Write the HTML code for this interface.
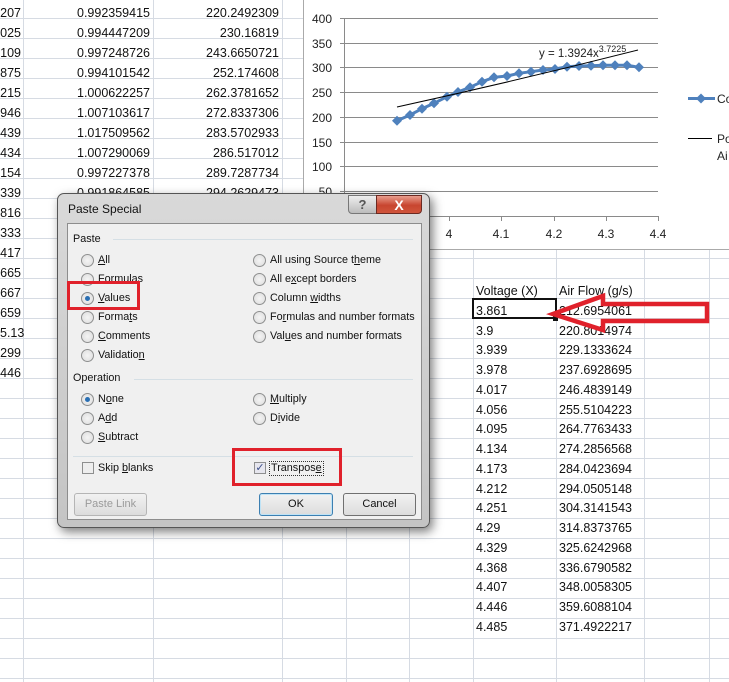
<!DOCTYPE html>
<html><head><meta charset="utf-8"><style>
*{margin:0;padding:0;box-sizing:border-box}
body{width:729px;height:682px;overflow:hidden;position:relative;background:#fff;font-family:"Liberation Sans",sans-serif;font-size:12.5px;color:#111}
.grid{position:absolute;left:0;top:0;width:729px;height:682px;
background-image:repeating-linear-gradient(to bottom,transparent 0,transparent 18px,#d6dbe3 18px,#d6dbe3 19px,transparent 19px,transparent 20px);}
.v{position:absolute;top:0;width:1px;height:682px;background:#d6dbe3}
.t{position:absolute;white-space:nowrap;line-height:14px}
.r{text-align:right}
.chart{position:absolute;left:303px;top:0;width:426px;height:250px;background:#fff;border-left:1px solid #aaa;border-bottom:1px solid #aaa}
.dlg{position:absolute;left:57px;top:193px;width:373px;height:335px;border-radius:7px;border:1px solid #555;background:linear-gradient(#d9d9d9,#c4c4c4);box-shadow:3px 4px 10px rgba(0,0,0,.5)}
.inner{position:absolute;left:9px;top:29px;width:355px;height:297px;background:#f0f0f0;border:1px solid #8d8d8d}
.lb{position:absolute;font-size:10.8px;white-space:nowrap;line-height:13px}
.rad{position:absolute;width:13px;height:13px;border-radius:50%;border:1px solid #8e8f8f;background:radial-gradient(circle,#f4f4f4,#dcdcdc)}
.rad.on::after{content:"";position:absolute;left:3px;top:3px;width:5px;height:5px;border-radius:50%;background:#2a6fb3}
.sep{position:absolute;height:1px;background:#d5dfe5}
.btn{position:absolute;height:23px;border:1px solid #707070;border-radius:3px;background:linear-gradient(#f2f2f2,#dcdcdc);font-size:11px;text-align:center;line-height:21px}
.redbox{position:absolute;border:3px solid #e0212b}
</style></head><body>
<div class="grid"></div>
<div class="v" style="left:23px"></div><div class="v" style="left:153px"></div><div class="v" style="left:282px"></div><div class="v" style="left:346px"></div><div class="v" style="left:409px"></div><div class="v" style="left:473px"></div><div class="v" style="left:556px"></div><div class="v" style="left:644px"></div><div class="v" style="left:709px"></div>

<div class="t r" style="left:0;width:21px;top:3px;line-height:20px">207<br>025<br>109<br>875<br>215<br>946<br>439<br>434<br>154<br>339<br>816<br>333<br>417<br>665<br>667<br>659<br>5.13<br>299<br>446</div>
<div class="t r" style="left:30px;width:120px;top:3px;line-height:20px">0.992359415<br>0.994447209<br>0.997248726<br>0.994101542<br>1.000622257<br>1.007103617<br>1.017509562<br>1.007290069<br>0.997227378<br>0.991864585</div>
<div class="t r" style="left:160px;width:119px;top:3px;line-height:20px">220.2492309<br>230.16819<br>243.6650721<br>252.174608<br>262.3781652<br>272.8337306<br>283.5702933<br>286.517012<br>289.7287734<br>294.2629473</div>

<div class="t" style="left:476px;top:282px;line-height:19.75px">Voltage (X)<br>3.861<br>3.9<br>3.939<br>3.978<br>4.017<br>4.056<br>4.095<br>4.134<br>4.173<br>4.212<br>4.251<br>4.29<br>4.329<br>4.368<br>4.407<br>4.446<br>4.485</div>
<div class="t" style="left:559px;top:282px;line-height:19.75px">Air Flow (g/s)<br>212.6954061<br>220.8014974<br>229.1333624<br>237.6928695<br>246.4839149<br>255.5104223<br>264.7763433<br>274.2856568<br>284.0423694<br>294.0505148<br>304.3141543<br>314.8373765<br>325.6242968<br>336.6790582<br>348.0058305<br>359.6088104<br>371.4922217</div>
<div style="position:absolute;left:472px;top:298px;width:85px;height:21px;border:2px solid #111"></div>
<div style="position:absolute;left:553px;top:316px;width:5px;height:5px;background:#111"></div>

<div class="chart"></div>
<svg style="position:absolute;left:0;top:0" width="729" height="682">
<g stroke="#8a8a8a" stroke-width="1">
<line x1="344" y1="18.5" x2="658" y2="18.5"/><line x1="344" y1="43.5" x2="658" y2="43.5"/><line x1="344" y1="67.5" x2="658" y2="67.5"/><line x1="344" y1="92.5" x2="658" y2="92.5"/><line x1="344" y1="117.5" x2="658" y2="117.5"/><line x1="344" y1="142.5" x2="658" y2="142.5"/><line x1="344" y1="166.5" x2="658" y2="166.5"/><line x1="344" y1="191.5" x2="658" y2="191.5"/>
<line x1="344.5" y1="18" x2="344.5" y2="217"/><line x1="340" y1="18.5" x2="344" y2="18.5"/><line x1="340" y1="43.5" x2="344" y2="43.5"/><line x1="340" y1="67.5" x2="344" y2="67.5"/><line x1="340" y1="92.5" x2="344" y2="92.5"/><line x1="340" y1="117.5" x2="344" y2="117.5"/><line x1="340" y1="142.5" x2="344" y2="142.5"/><line x1="340" y1="166.5" x2="344" y2="166.5"/><line x1="340" y1="191.5" x2="344" y2="191.5"/>
<line x1="344" y1="216.5" x2="658" y2="216.5"/>
<line x1="449.5" y1="216" x2="449.5" y2="221"/><line x1="501.5" y1="216" x2="501.5" y2="221"/><line x1="554.5" y1="216" x2="554.5" y2="221"/><line x1="606.5" y1="216" x2="606.5" y2="221"/><line x1="658.5" y1="216" x2="658.5" y2="221"/>
</g>
<g font-family="Liberation Sans,sans-serif" font-size="12" fill="#222" text-anchor="end">
<text x="332" y="23">400</text><text x="332" y="48">350</text><text x="332" y="72">300</text><text x="332" y="97">250</text><text x="332" y="122">200</text><text x="332" y="147">150</text><text x="332" y="171">100</text><text x="332" y="196">50</text>
</g>
<g font-family="Liberation Sans,sans-serif" font-size="12" fill="#222" text-anchor="middle">
<text x="449" y="238">4</text><text x="501" y="238">4.1</text><text x="554" y="238">4.2</text><text x="606" y="238">4.3</text><text x="658" y="238">4.4</text>
</g>
<polyline fill="none" stroke="#4f81bd" stroke-width="3" points="397,120.7 410,115 422,108.7 434,103.3 447,96.7 458,92 470,87.3 482,81.7 494,77.3 507,76 519,73.3 531,71.7 543,70 555,69 567,66.7 579,66 591,65.7 603,65.3 615,65.3 627,65.3 639,67.3"/>
<g fill="#4f81bd">
<path d="M397 115.7l5 5-5 5-5-5z"/><path d="M410 110l5 5-5 5-5-5z"/><path d="M422 103.7l5 5-5 5-5-5z"/><path d="M434 98.3l5 5-5 5-5-5z"/><path d="M447 91.7l5 5-5 5-5-5z"/><path d="M458 87l5 5-5 5-5-5z"/><path d="M470 82.3l5 5-5 5-5-5z"/><path d="M482 76.7l5 5-5 5-5-5z"/><path d="M494 72.3l5 5-5 5-5-5z"/><path d="M507 71l5 5-5 5-5-5z"/><path d="M519 68.3l5 5-5 5-5-5z"/><path d="M531 66.7l5 5-5 5-5-5z"/><path d="M543 65l5 5-5 5-5-5z"/><path d="M555 64l5 5-5 5-5-5z"/><path d="M567 61.7l5 5-5 5-5-5z"/><path d="M579 61l5 5-5 5-5-5z"/><path d="M591 60.7l5 5-5 5-5-5z"/><path d="M603 60.3l5 5-5 5-5-5z"/><path d="M615 60.3l5 5-5 5-5-5z"/><path d="M627 60.3l5 5-5 5-5-5z"/><path d="M639 62.3l5 5-5 5-5-5z"/>
</g>
<path d="M397 107 Q520 80 638 50" fill="none" stroke="#000" stroke-width="1"/>
<text x="539" y="57" font-family="Liberation Sans,sans-serif" font-size="11.5" fill="#222">y = 1.3924x<tspan dy="-5" font-size="9">3.7225</tspan></text>
<line x1="688" y1="98.5" x2="715" y2="98.5" stroke="#4f81bd" stroke-width="3"/><path d="M701 93.5l5 5-5 5-5-5z" fill="#4f81bd"/>
<text x="717" y="103" font-family="Liberation Sans,sans-serif" font-size="12" fill="#222">Co</text>
<line x1="688" y1="138.5" x2="712" y2="138.5" stroke="#000"/>
<text x="717" y="143" font-family="Liberation Sans,sans-serif" font-size="12" fill="#222">Po</text>
<text x="717" y="160" font-family="Liberation Sans,sans-serif" font-size="12" fill="#222">Ai</text>
<path d="M553 314 L603 296 L603 304 L707 304 L707 321 L603 321 L603 330 Z" fill="none" stroke="#e0212b" stroke-width="4.5" stroke-linejoin="miter"/>
</svg>

<div class="dlg">
 <div class="lb" style="left:10px;top:9px;font-size:12px">Paste Special</div>
 <div style="position:absolute;left:290px;top:1px;width:29px;height:19px;border:1px solid #777;border-radius:0 0 0 4px;background:linear-gradient(#eee,#bbb);text-align:center;font-size:13px;font-weight:bold;color:#555;line-height:18px">?</div>
 <div style="position:absolute;left:318px;top:1px;width:46px;height:19px;border:1px solid #6b2a22;border-radius:0 0 4px 0;background:linear-gradient(#e99e8e,#c8452f 55%,#d0553c);text-align:center;font-size:14px;font-weight:bold;color:#fff;line-height:18px">X</div>
 <div class="inner">
  <div class="lb" style="left:5px;top:9px">Paste</div><div class="sep" style="left:45px;top:15px;width:300px"></div>
  <div class="rad" style="left:13px;top:30px"></div><div class="lb" style="left:30px;top:30px"><u>A</u>ll</div>
  <div class="rad" style="left:13px;top:49px"></div><div class="lb" style="left:30px;top:49px">Formulas</div>
  <div class="rad on" style="left:13px;top:68px"></div><div class="lb" style="left:30px;top:68px"><u>V</u>alues</div>
  <div class="rad" style="left:13px;top:87px"></div><div class="lb" style="left:30px;top:87px">Forma<u>t</u>s</div>
  <div class="rad" style="left:13px;top:106px"></div><div class="lb" style="left:30px;top:106px"><u>C</u>omments</div>
  <div class="rad" style="left:13px;top:125px"></div><div class="lb" style="left:30px;top:125px">Validatio<u>n</u></div>
  <div class="rad" style="left:185px;top:30px"></div><div class="lb" style="left:202px;top:30px">All using Source t<u>h</u>eme</div>
  <div class="rad" style="left:185px;top:49px"></div><div class="lb" style="left:202px;top:49px">All e<u>x</u>cept borders</div>
  <div class="rad" style="left:185px;top:68px"></div><div class="lb" style="left:202px;top:68px">Column <u>w</u>idths</div>
  <div class="rad" style="left:185px;top:87px"></div><div class="lb" style="left:202px;top:87px">Fo<u>r</u>mulas and number formats</div>
  <div class="rad" style="left:185px;top:106px"></div><div class="lb" style="left:202px;top:106px">Val<u>u</u>es and number formats</div>
  <div class="lb" style="left:5px;top:148px">Operation</div><div class="sep" style="left:66px;top:155px;width:279px"></div>
  <div class="rad on" style="left:13px;top:169px"></div><div class="lb" style="left:30px;top:169px">N<u>o</u>ne</div>
  <div class="rad" style="left:13px;top:188px"></div><div class="lb" style="left:30px;top:188px">A<u>d</u>d</div>
  <div class="rad" style="left:13px;top:207px"></div><div class="lb" style="left:30px;top:207px"><u>S</u>ubtract</div>
  <div class="rad" style="left:185px;top:169px"></div><div class="lb" style="left:202px;top:169px"><u>M</u>ultiply</div>
  <div class="rad" style="left:185px;top:188px"></div><div class="lb" style="left:202px;top:188px">D<u>i</u>vide</div>
  <div class="sep" style="left:5px;top:232px;width:340px"></div>
  <div style="position:absolute;left:14px;top:238px;width:12px;height:12px;border:1px solid #8e8f8f;background:#eee"></div><div class="lb" style="left:30px;top:238px">Skip <u>b</u>lanks</div>
  <div style="position:absolute;left:186px;top:238px;width:12px;height:12px;border:1px solid #8e8f8f;background:#e6e6ee;font-size:11px;line-height:10px;color:#3c4f8a;text-align:center">✓</div><div class="lb" style="left:201px;top:237px;border:1px dotted #333;padding:0 1px">Transpos<u>e</u></div>
  <div class="btn" style="left:6px;top:269px;width:73px;color:#9a9a9a;border-color:#b5b5b5">Paste Link</div>
  <div class="btn" style="left:191px;top:269px;width:74px;border-color:#3c7fb1;box-shadow:inset 0 0 0 1px #bfe3f6">OK</div>
  <div class="btn" style="left:275px;top:269px;width:73px">Cancel</div>
 </div>
</div>
<div class="redbox" style="left:67px;top:281px;width:73px;height:29px"></div>
<div class="redbox" style="left:232px;top:448px;width:110px;height:38px"></div>
</body></html>
